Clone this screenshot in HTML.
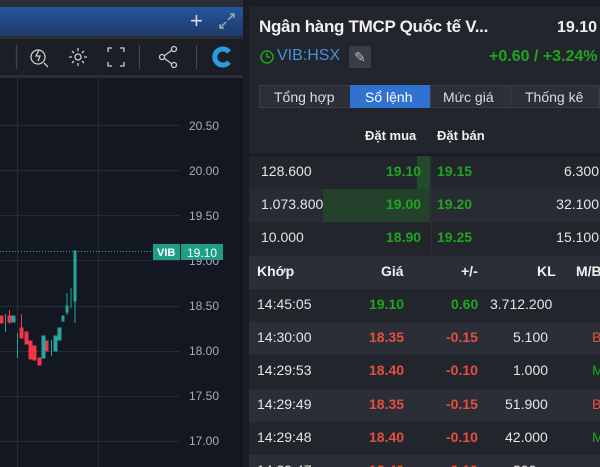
<!DOCTYPE html>
<html><head><meta charset="utf-8"><style>
html,body{margin:0;width:600px;height:467px;overflow:hidden}
body{background:#1a1d23;font-family:"Liberation Sans",Arial,sans-serif;position:relative}
.abs{position:absolute}
#left{left:0;top:0;width:243px;height:467px;background:#131722}
#right{left:249px;top:0;width:351px;height:467px;background:#22252c;overflow:hidden}
.row{position:absolute;left:0;width:351px;height:33px;font-size:14px;color:#e6e6e6}
.row span{position:absolute;top:7px}
.g{color:#1fa51f;font-weight:bold}.r{color:#e2513f;font-weight:bold}
</style></head><body>
<div id="left" class="abs">
 <div class="abs" style="left:0;top:0;width:243px;height:7px;background:#2a2d33"></div>
 <div class="abs" style="left:0;top:7px;width:243px;height:29px;background:linear-gradient(#2456a0,#1d3a6a)"></div>
 <div class="abs" style="left:190px;top:8px;color:#ddd;font-size:22px">+</div>
 <svg class="abs" style="left:218px;top:12px" width="18" height="18" viewBox="0 0 18 18" stroke="#9aa" fill="none" stroke-width="1.5"><path d="M10 8L16 2M12 2h4v4M8 10L2 16M2 12v4h4"/></svg>
 <div class="abs" style="left:0;top:36px;width:243px;height:3px;background:#2a2d33"></div>
 <div class="abs" style="left:0;top:39px;width:243px;height:36px;background:#1b1e26"></div>
 <div class="abs" style="left:0;top:75px;width:243px;height:3px;background:#2a2d33"></div>
 <svg class="abs" style="left:0;top:39px" width="243" height="36" stroke="#ccc" fill="none" stroke-width="1.3">
  <line x1="16.5" y1="6" x2="16.5" y2="30" stroke="#444"/>
  <circle cx="38" cy="18" r="7"/><path d="M44 24l4 4M39 11l-3 6h4l-2 5" />
  <circle cx="78" cy="18" r="3"/><path d="M78 9v3M78 24v3M69 18h3M84 18h3M72 12l2 2M82 22l2 2M72 24l2-2M82 14l2-2"/>
  <path d="M108 13v-4h4M120 9h4v4M124 23v4h-4M112 27h-4v-4"/>
  <line x1="139.5" y1="6" x2="139.5" y2="30" stroke="#444"/>
  <circle cx="174" cy="10" r="2.5"/><circle cx="162" cy="18" r="2.5"/><circle cx="174" cy="26" r="2.5"/><path d="M164 17l8-6M164 19l8 6"/>
  <line x1="196.5" y1="6" x2="196.5" y2="30" stroke="#444"/>
  <path d="M229 13a8 8 0 1 0 0 10" stroke="#2a9de0" stroke-width="5"/>
 </svg>
 <svg class="abs" style="left:0;top:78px" width="243" height="389">
  <g stroke="#262a35" stroke-width="1">
   <line x1="17.5" y1="0" x2="17.5" y2="389"/><line x1="98.5" y1="0" x2="98.5" y2="389"/>
   <line x1="0" y1="47.5" x2="180" y2="47.5"/><line x1="0" y1="92.5" x2="180" y2="92.5"/><line x1="0" y1="137.5" x2="180" y2="137.5"/><line x1="0" y1="182.5" x2="180" y2="182.5"/><line x1="0" y1="228.5" x2="180" y2="228.5"/><line x1="0" y1="273.5" x2="180" y2="273.5"/><line x1="0" y1="318.5" x2="180" y2="318.5"/><line x1="0" y1="363.5" x2="180" y2="363.5"/>
  </g>
  <line x1="0" y1="173.5" x2="153" y2="173.5" stroke="#26a69a" stroke-dasharray="1,2"/>
  <g fill="#a9acb3" font-size="12" font-family="Liberation Sans">
   <text x="189" y="52">20.50</text><text x="189" y="97">20.00</text><text x="189" y="142">19.50</text><text x="189" y="187">19.00</text><text x="189" y="232">18.50</text><text x="189" y="277">18.00</text><text x="189" y="322">17.50</text><text x="189" y="367">17.00</text>
  </g>
  <rect x="153" y="166" width="27" height="16" fill="#1f9e86"/><rect x="181" y="166" width="42" height="16" fill="#1f9e86"/>
  <text x="157" y="178" fill="#fff" font-size="11" font-weight="bold" font-family="Liberation Sans">VIB</text>
  <text x="187" y="179" fill="#fff" font-size="12" font-family="Liberation Sans">19.10</text>
  <g stroke-width="1">
   <g fill="#f23645" stroke="#f23645">
    <rect x="0" y="238" width="3" height="7"/><rect x="8" y="238" width="3" height="6"/><line x1="9.5" y1="232" x2="9.5" y2="246"/>
    <rect x="20" y="250" width="3" height="10"/><line x1="21.5" y1="236" x2="21.5" y2="260"/>
    <rect x="25" y="254" width="3" height="12"/><rect x="29" y="263" width="3" height="18"/><rect x="33" y="268" width="3" height="14"/><rect x="38" y="280" width="3" height="7"/><rect x="45" y="263" width="3" height="10"/>
   </g>
   <g fill="#26a69a" stroke="#26a69a">
    <rect x="12" y="238" width="3" height="6"/><line x1="5.5" y1="236" x2="5.5" y2="254"/>
    <line x1="17.5" y1="255" x2="17.5" y2="280"/><rect x="42" y="258" width="3" height="22"/>
    <rect x="54" y="258" width="3" height="15"/><line x1="51.5" y1="262" x2="51.5" y2="278"/>
    <rect x="58" y="250" width="3" height="12"/><rect x="62" y="238" width="2" height="5"/>
    <rect x="66" y="228" width="2" height="6"/><line x1="67" y1="215" x2="67" y2="237"/>
    <line x1="71" y1="210" x2="71" y2="230"/><rect x="74" y="173" width="2" height="50"/><line x1="75" y1="173" x2="75" y2="245"/>
   </g>
  </g>
 </svg>
</div>
<div id="right" class="abs">
 <div class="abs" style="left:0;top:0;width:351px;height:7px;background:#1a1d23"></div>
 <div class="abs" style="left:10px;top:17px;color:#f0f0f0;font-size:17px;font-weight:bold;letter-spacing:-0.3px">Ngân hàng TMCP Quốc tế V...</div>
 <div class="abs" style="left:308px;top:19px;color:#f0f0f0;font-size:16px;font-weight:bold">19.10</div>
 <svg class="abs" style="left:10px;top:49px" width="16" height="16" fill="none" stroke="#1fa51f" stroke-width="1.5"><circle cx="8" cy="8" r="6"/><path d="M8 4v4h3"/></svg>
 <div class="abs" style="left:28px;top:47px;color:#4a8fdc;font-size:16px">VIB:HSX</div>
 <div class="abs" style="left:100px;top:46px;width:22px;height:22px;background:#3a3d45;border-radius:2px;color:#bbb;font-size:14px;text-align:center;line-height:22px">✎</div>
 <div class="abs" style="left:240px;top:48px;color:#1fa51f;font-size:16px;font-weight:bold">+0.60 / +3.24%</div>
 <div class="abs" style="left:10px;top:85px;width:341px;height:23px;background:#2c2f37;border:1px solid #3a3d45;box-sizing:border-box"></div>
 <div class="abs" style="left:101px;top:85px;width:80px;height:23px;background:#2f72d0"></div>
 <div class="abs" style="left:261px;top:86px;width:1px;height:21px;background:#3a3d45"></div>
 <div class="abs" style="left:181px;top:86px;width:1px;height:21px;background:#3a3d45"></div>
 <div class="abs" style="top:89px;left:25px;color:#ddd;font-size:14px">Tổng hợp</div>
 <div class="abs" style="top:89px;left:116px;color:#fff;font-size:14px">Sổ lệnh</div>
 <div class="abs" style="top:89px;left:194px;color:#ddd;font-size:14px">Mức giá</div>
 <div class="abs" style="top:89px;left:276px;color:#ddd;font-size:14px">Thống kê</div>
 <div class="abs" style="top:128px;left:116px;color:#f0f0f0;font-size:13px;font-weight:bold">Đặt mua</div>
 <div class="abs" style="top:128px;left:188px;color:#f0f0f0;font-size:13px;font-weight:bold">Đặt bán</div>
 <div class="abs" style="left:0;top:153px;width:351px;height:3px;background:#1a1d23"></div>
 <div class="row" style="top:156px"><div class="abs" style="left:168px;top:0;width:13px;height:33px;background:#234a2c"></div><span style="left:12px">128.600</span><span class="g" style="left:137px">19.10</span><span class="g" style="left:188px">19.15</span><span style="right:1px">6.300</span></div>
 <div class="row" style="top:189px;background:#282b33"><div class="abs" style="left:74px;top:0;width:107px;height:33px;background:#24412b"></div><span style="left:12px">1.073.800</span><span class="g" style="left:137px">19.00</span><span class="g" style="left:188px">19.20</span><span style="right:1px">32.100</span></div>
 <div class="row" style="top:222px"><span style="left:12px">10.000</span><span class="g" style="left:137px">18.90</span><span class="g" style="left:188px">19.25</span><span style="right:1px">15.100</span></div>
 <div class="abs" style="left:182px;top:156px;width:1px;height:99px;background:#2a2d35"></div>
 <div class="row" style="top:256px;background:#2b2e36;font-weight:bold;color:#f0f0f0"><span style="left:8px">Khớp</span><span style="left:132px">Giá</span><span style="left:212px">+/-</span><span style="left:288px">KL</span><span style="left:327px">M/B</span></div>
 <div class="row" style="top:289px"><span style="left:8px">14:45:05</span><span class="g" style="left:120px">19.10</span><span class="g" style="left:202px">0.60</span><span style="left:241px">3.712.200</span></div>
 <div class="row" style="top:322px;background:#2b2e36"><span style="left:8px">14:30:00</span><span class="r" style="left:120px">18.35</span><span class="r" style="left:197px">-0.15</span><span style="left:264px">5.100</span><span style="left:343px;color:#e2513f">B</span></div>
 <div class="row" style="top:355px"><span style="left:8px">14:29:53</span><span class="r" style="left:120px">18.40</span><span class="r" style="left:197px">-0.10</span><span style="left:264px">1.000</span><span style="left:343px;color:#1fa51f">M</span></div>
 <div class="row" style="top:389px;background:#2b2e36"><span style="left:8px">14:29:49</span><span class="r" style="left:120px">18.35</span><span class="r" style="left:197px">-0.15</span><span style="left:256px">51.900</span><span style="left:343px;color:#e2513f">B</span></div>
 <div class="row" style="top:422px"><span style="left:8px">14:29:48</span><span class="r" style="left:120px">18.40</span><span class="r" style="left:197px">-0.10</span><span style="left:256px">42.000</span><span style="left:343px;color:#1fa51f">M</span></div>
 <div class="row" style="top:455px;background:#2b2e36"><span style="left:8px">14:29:47</span><span class="r" style="left:120px">18.40</span><span class="r" style="left:197px">-0.10</span><span style="left:264px">300</span></div>
</div>
</body></html>
